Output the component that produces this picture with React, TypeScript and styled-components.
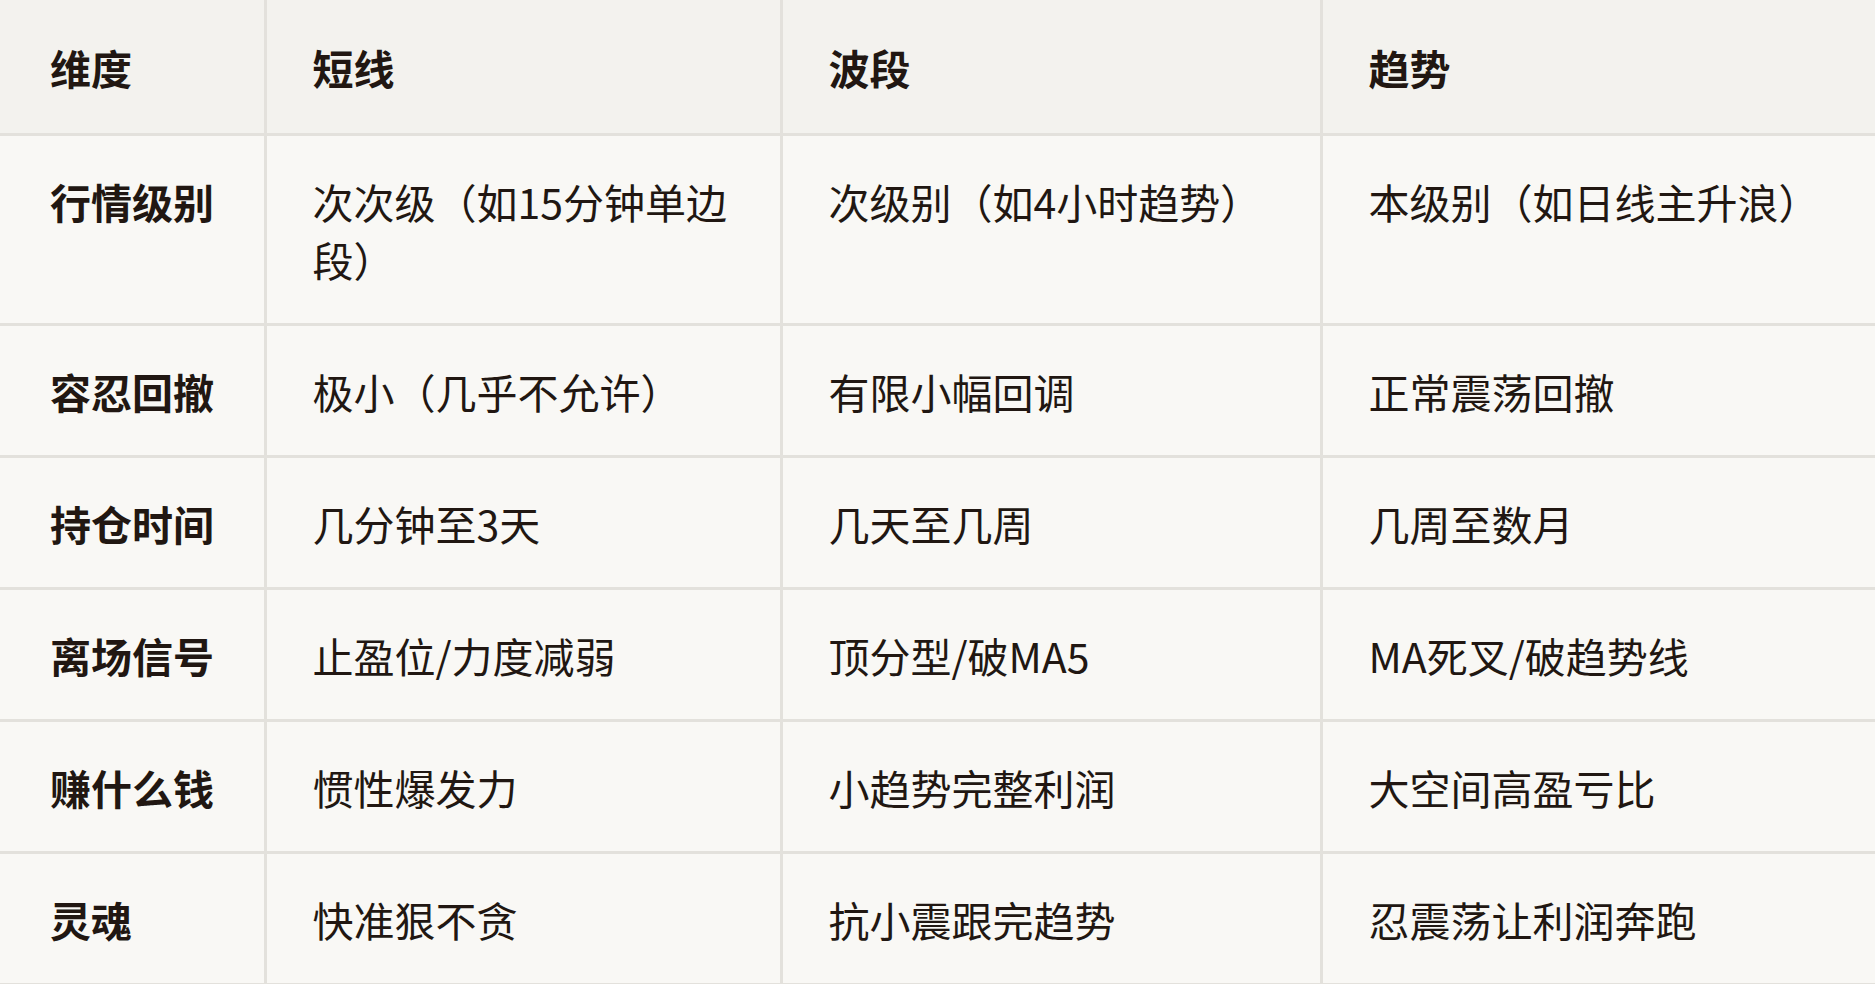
import React from "react";
import styled, { createGlobalStyle } from "styled-components";

const GlobalStyle = createGlobalStyle`
  html, body {
    margin: 0;
    padding: 0;
    background: #f9f8f5;
    overflow: hidden;
  }
  body {
    font-family: "Noto Sans CJK SC", "Noto Sans", sans-serif;
    color: #211712;
  }
`;

const rows: string[][] = [
  ["行情级别", "次次级（如15分钟单边段）", "次级别（如4小时趋势）", "本级别（如日线主升浪）"],
  ["容忍回撤", "极小（几乎不允许）", "有限小幅回调", "正常震荡回撤"],
  ["持仓时间", "几分钟至3天", "几天至几周", "几周至数月"],
  ["离场信号", "止盈位/力度减弱", "顶分型/破MA5", "MA死叉/破趋势线"],
  ["赚什么钱", "惯性爆发力", "小趋势完整利润", "大空间高盈亏比"],
  ["灵魂", "快准狠不贪", "抗小震跟完趋势", "忍震荡让利润奔跑"],
];

const headers = ["维度", "短线", "波段", "趋势"];

function App() {
  return (
    <>
      <GlobalStyle />
      <Table>
        <colgroup>
          <col style={{ width: 265 }} />
          <col style={{ width: 516 }} />
          <col style={{ width: 540 }} />
          <col />
        </colgroup>
        <thead>
          <tr>
            {headers.map((h) => (
              <HeadCell key={h}>{h}</HeadCell>
            ))}
          </tr>
        </thead>
        <tbody>
          {rows.map((r) => (
            <tr key={r[0]}>
              <Cell $bold>{r[0]}</Cell>
              <Cell>{r[1]}</Cell>
              <Cell>{r[2]}</Cell>
              <Cell>{r[3]}</Cell>
            </tr>
          ))}
        </tbody>
      </Table>
    </>
  );
}

const Table = styled.table`
  width: 1875px;
  table-layout: fixed;
  border-collapse: collapse;
  font-size: 41px;
  line-height: 58px;
`;

const baseCell = `
  text-align: left;
  vertical-align: top;
  border: 3px solid #e3e1dc;
  padding-left: 46px;
  padding-right: 40px;
  &:first-child {
    border-left: none;
    padding-left: 50px;
  }
  &:last-child {
    border-right: none;
  }
`;

const HeadCell = styled.th`
  ${baseCell}
  padding-top: 38px;
  padding-bottom: 37px;
  border-top: none;
  background: #f3f2ee;
  font-weight: 700;
`;

const Cell = styled.td<{ $bold?: boolean }>`
  ${baseCell}
  padding-top: 35.5px;
  padding-bottom: 35.5px;
  background: #f9f8f5;
  font-weight: ${(p) => (p.$bold ? 700 : 400)};
`;

export default App;
